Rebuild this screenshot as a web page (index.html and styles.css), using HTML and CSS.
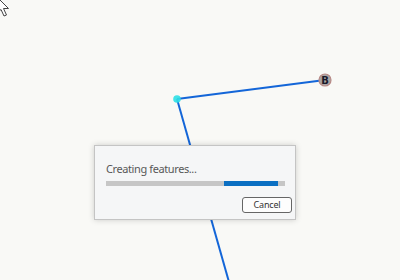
FILE: index.html
```html
<!DOCTYPE html>
<html>
<head>
<meta charset="utf-8">
<link rel="stylesheet" href="styles.css">
</head>
<body>
<div class="canvas">
  <svg class="map" width="400" height="280" viewBox="0 0 400 280">
    <line x1="177" y1="99" x2="325" y2="80" stroke="#1466d8" stroke-width="2"/>
    <line x1="177" y1="99" x2="229" y2="282" stroke="#1466d8" stroke-width="2"/>
    <circle cx="177" cy="99" r="3.8" fill="#2ee0e6" opacity="0.9"/>
    <circle cx="325" cy="80" r="6" fill="#a9a6a4" stroke="#b88a86" stroke-width="1.2"/>
    <text x="325" y="83.5" text-anchor="middle" class="nodelabel">B</text>
    <path d="M-3 -3 L-3 13 L1 9.5 L4 16 L6.5 15 L3.5 8.5 L8.5 8.5 Z" fill="#ffffff" stroke="#444" stroke-width="1"/>
  </svg>
  <div class="dialog">
    <div class="msg">Creating features...</div>
    <div class="track"><div class="fill"></div></div>
    <button class="btn">Cancel</button>
  </div>
</div>
</body>
</html>
```

FILE: styles.css
```css
html, body {
  margin: 0;
  padding: 0;
  background: #f9f9f6;
}
.canvas {
  position: relative;
  width: 400px;
  height: 280px;
  overflow: hidden;
  font-family: "Noto Sans", "Open Sans", sans-serif;
}
.map {
  position: absolute;
  left: 0;
  top: 0;
}
.nodelabel {
  font-family: "DejaVu Sans", sans-serif;
  font-weight: bold;
  font-size: 10px;
  fill: #1a1a2a;
}
.dialog {
  position: absolute;
  left: 94px;
  top: 145px;
  width: 186px;
  height: 52px;
  padding: 16px 3px 5px 11px;
  border: 1px solid #c4c4c4;
  background: #f5f6f7;
  box-shadow: 0 0 6px rgba(0,0,0,0.18);
  display: flex;
  flex-direction: column;
}
.msg {
  font-size: 11px;
  line-height: 14px;
  letter-spacing: -0.4px;
  color: #585858;
  height: 14px;
}
.track {
  position: relative;
  margin-top: 5px;
  width: 179px;
  height: 5px;
  background: #c6c6c6;
}
.fill {
  position: absolute;
  left: 118px;
  top: 0;
  width: 54px;
  height: 5px;
  background: #0b6fc2;
}
.btn {
  align-self: flex-end;
  margin-top: 11px;
  width: 50px;
  height: 16px;
  padding: 0;
  border: 1px solid #666;
  border-radius: 3px;
  background: #fdfdfd;
  font-family: "Noto Sans", "Open Sans", sans-serif;
  font-size: 9px;
  line-height: 14px;
  letter-spacing: -0.2px;
  color: #333;
}
```
